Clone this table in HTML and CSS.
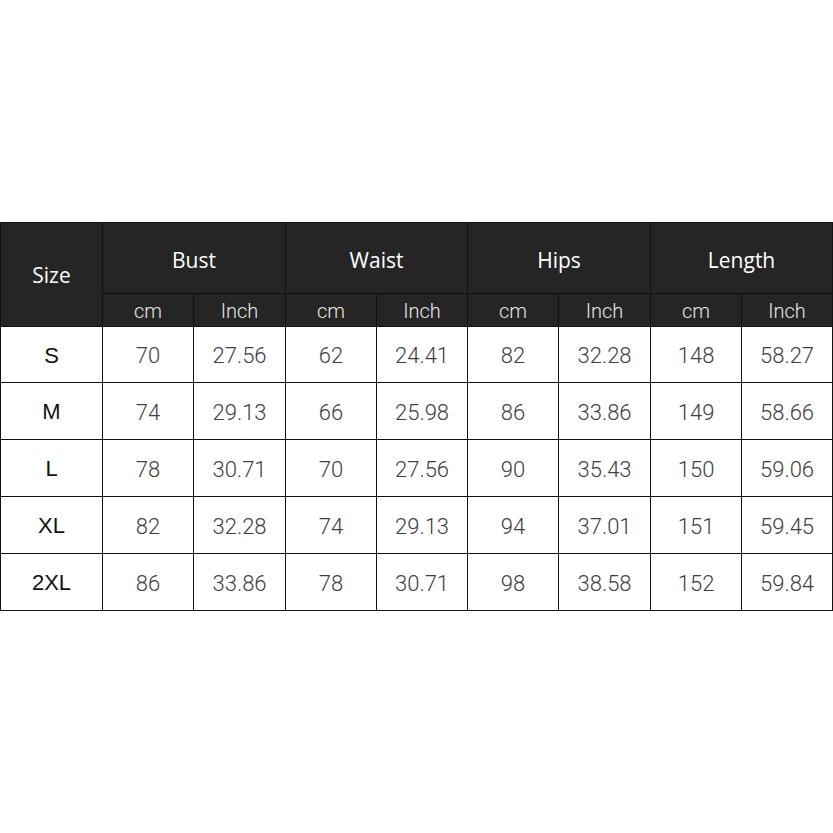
FILE: index.html
```html
<!DOCTYPE html>
<html>
<head>
<meta charset="utf-8">
<link rel="stylesheet" href="styles.css">
</head>
<body>
<table class="chart">
  <colgroup>
    <col class="c-size">
    <col class="c-a"><col class="c-b">
    <col class="c-a"><col class="c-a">
    <col class="c-a"><col class="c-b">
    <col class="c-a"><col class="c-a">
  </colgroup>
  <thead>
    <tr class="h1">
      <th rowspan="2" class="size-h">Size</th>
      <th colspan="2">Bust</th>
      <th colspan="2">Waist</th>
      <th colspan="2">Hips</th>
      <th colspan="2">Length</th>
    </tr>
    <tr class="h2">
      <th>cm</th><th>Inch</th>
      <th>cm</th><th>Inch</th>
      <th>cm</th><th>Inch</th>
      <th>cm</th><th>Inch</th>
    </tr>
  </thead>
  <tbody>
    <tr class="first"><td class="sz">S</td><td>70</td><td>27.56</td><td>62</td><td>24.41</td><td>82</td><td>32.28</td><td>148</td><td>58.27</td></tr>
    <tr><td class="sz">M</td><td>74</td><td>29.13</td><td>66</td><td>25.98</td><td>86</td><td>33.86</td><td>149</td><td>58.66</td></tr>
    <tr><td class="sz">L</td><td>78</td><td>30.71</td><td>70</td><td>27.56</td><td>90</td><td>35.43</td><td>150</td><td>59.06</td></tr>
    <tr><td class="sz">XL</td><td>82</td><td>32.28</td><td>74</td><td>29.13</td><td>94</td><td>37.01</td><td>151</td><td>59.45</td></tr>
    <tr><td class="sz">2XL</td><td>86</td><td>33.86</td><td>78</td><td>30.71</td><td>98</td><td>38.58</td><td>152</td><td>59.84</td></tr>
  </tbody>
</table>
</body>
</html>
```

FILE: styles.css
```css
html, body {
  margin: 0;
  padding: 0;
  background: #ffffff;
}
body {
  height: 833px;
  display: flex;
  align-items: center;
}
.chart {
  width: 833px;
  table-layout: fixed;
  border-collapse: collapse;
}
.c-size { width: 102px; }
.c-a { width: 91px; }
.c-b { width: 92px; }
.chart th, .chart td {
  border: 1px solid #111;
  padding: 0;
  text-align: center;
  vertical-align: middle;
}
.chart th {
  background: #252525;
  color: #ffffff;
  font-family: "Open Sans", "Noto Sans", sans-serif;
  font-weight: 400;
  font-size: 21px;
}
.h1 { height: 71px; }
.h1 th { padding-top: 4px; }
.h1 .size-h { padding-top: 0; font-size: 21px; }
.h2 { height: 33px; }
.h2 th {
  font-family: Roboto, "Noto Sans", sans-serif;
  font-weight: 300;
  font-size: 20px;
  color: #e6e6e6;
  padding-top: 2px;
}
.chart tbody tr { height: 57px; }
.chart tbody tr.first { height: 56px; }
.chart td {
  font-family: Roboto, "Noto Sans", sans-serif;
  font-weight: 300;
  font-size: 22px;
  color: #404040;
  padding-top: 2px;
}
.chart td.sz {
  font-family: "Liberation Sans", Arial, sans-serif;
  font-weight: 400;
  font-size: 22px;
  color: #111;
}
```
